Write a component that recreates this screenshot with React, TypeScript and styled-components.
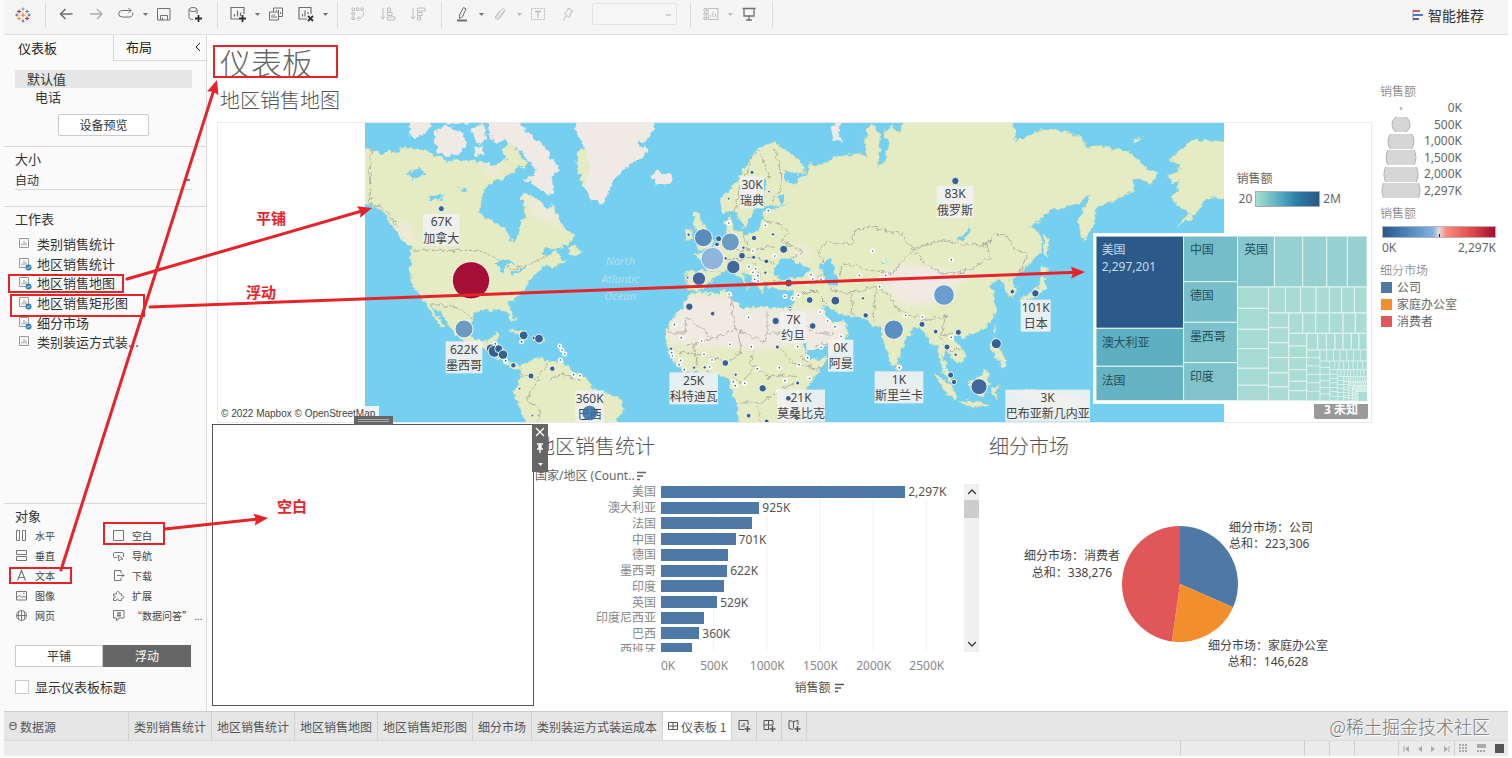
import React from "react";
import styled, { createGlobalStyle, css } from "styled-components";

const uiFont = `"Noto Sans", "Noto Sans CJK SC", sans-serif`;
const cjkFont = `"Noto Sans CJK SC", sans-serif`;

const GlobalStyle = createGlobalStyle`
  * { box-sizing: border-box; }
  body { margin: 0; background: #fff; color: #333; font-family: ${uiFont}; font-size: 12px; }
  button, select, input { font: inherit; color: inherit; margin: 0; }
  ul { list-style: none; margin: 0; padding: 0; }
  svg { display: block; }
  h1, h2, h3, p { margin: 0; font-weight: 300; }
`;

const Shell = styled.div`
  position: relative;
  display: flex;
  flex-direction: column;
  min-height: 100vh;
  padding: 0 4px 2px;
  background: linear-gradient(to right, #fafafa 4px, #fff 4px);
`;

/* ---------- toolbar ---------- */

const Toolbar = styled.header`
  display: flex;
  height: 35px;
  padding: 2px 24px 6px 0;
  background: #f5f5f5;
  border-bottom: 1px solid #e0e0e0;
`;
const Logo = styled.div`
  display: flex;
  align-items: center;
  width: 42px;
  padding-left: 11px;
  border-right: 1px solid #dcdcdc;
`;
const ToolGroup = styled.div`
  display: flex;
  align-items: center;
  padding: 0 8px 2px 5px;
  border-right: 1px solid #dcdcdc;
`;
const ToolButton = styled.button<{ $muted?: boolean }>`
  display: grid;
  place-items: center;
  width: 30px;
  height: 24px;
  padding: 0;
  border: 0;
  background: none;
  color: ${(p) => (p.$muted ? "#bdbdbd" : "#707070")};
`;
const CaretButton = styled(ToolButton)`
  width: 8px;
`;
const FitSelect = styled.select`
  width: 85px;
  height: 22px;
  margin: 0 5px 0 9px;
  appearance: none;
  border: 1px solid #dcdcdc;
  border-radius: 2px;
  background: #f7f7f7 linear-gradient(#c4c4c4, #c4c4c4) no-repeat 73px 10px / 5px 2px;
`;
const ShowMe = styled.button`
  display: flex;
  align-items: center;
  gap: 4px;
  margin-left: auto;
  padding: 0;
  border: 0;
  background: none;
  font-family: ${cjkFont};
  font-size: 14px;
  line-height: 24px;
`;

/* ---------- side pane ---------- */

const Workspace = styled.div`
  display: flex;
  flex: 1;
`;
const SidePane = styled.aside`
  display: flex;
  flex-direction: column;
  flex: none;
  width: 203px;
  background: #fafafa;
  border-right: 1px solid #d8d8d8;
  font-family: ${cjkFont};
`;
const PaneTabs = styled.div`
  display: flex;
`;
const PaneTab = styled.button<{ $active?: boolean }>`
  display: flex;
  align-items: center;
  justify-content: space-between;
  flex: ${(p) => (p.$active ? "0 0 109px" : "1")};
  height: 26px;
  padding: 0 4px 2px ${(p) => (p.$active ? 14 : 12)}px;
  border: 0;
  background: none;
  font-size: 13px;
  color: #222;
  ${(p) => !p.$active && css`border-left: 1px solid #d8d8d8; border-bottom: 1px solid #d8d8d8;`}
`;
const DeviceList = styled.div`
  display: flex;
  flex-direction: column;
  align-items: center;
  height: 85px;
  padding: 9px 14px 0 11px;
`;
const Device = styled.button<{ $active?: boolean; $indent?: number }>`
  width: 100%;
  height: 18px;
  padding: 0 0 0 ${(p) => p.$indent}px;
  border: 0;
  background: ${(p) => (p.$active ? "#e6e6e6" : "none")};
  font-size: 13px;
  line-height: 18px;
  text-align: left;
`;
const PreviewButton = styled.button`
  width: 91px;
  height: 22px;
  margin-top: 8px;
  padding: 0;
  border: 1px solid #ccc;
  border-radius: 2px;
  background: #fff;
  line-height: 20px;
`;
const Section = styled.section<{ $grow?: boolean }>`
  padding: 3px 14px 0 11px;
  border-top: 1px solid #d8d8d8;
  ${(p) => p.$grow && css`flex: 1;`}
`;
const SectionTitle = styled.h2`
  font-size: 13px;
  font-weight: 400;
  line-height: 18px;
`;
const SizeSelect = styled.select`
  width: 100%;
  height: 20px;
  margin: 2px 0 16px;
  padding: 0;
  appearance: none;
  border: 0;
  border-bottom: 1px solid #d8d8d8;
  background: linear-gradient(#777, #777) no-repeat right 2px center / 4px 2px;
`;
const SheetList = styled.ul`
  display: flex;
  flex-direction: column;
  height: 118px;
  margin-top: 6px;
`;
const SheetItem = styled.button`
  display: flex;
  align-items: center;
  gap: 5px;
  height: 20px;
  padding: 0 0 0 3px;
  border: 0;
  background: none;
  font-size: 13px;
  line-height: 20px;
  white-space: nowrap;
`;
const SheetRow = styled.li`
  display: flex;
  align-items: center;
  flex: 1;
  min-height: 0;
`;
const ObjectGrid = styled.div`
  display: grid;
  grid-template-columns: 97px 1fr;
  grid-auto-rows: 20px;
`;
const ObjectButton = styled.button`
  display: flex;
  align-items: center;
  gap: 7px;
  padding: 0;
  border: 0;
  background: none;
  font-size: 10px;
  white-space: nowrap;
  color: #444;
  svg { color: #777; }
`;
const ModeSwitch = styled.div`
  display: flex;
  margin: 20px 1px 10px 0;
`;
const ModeButton = styled.button<{ $active?: boolean }>`
  flex: 1;
  height: 22px;
  padding: 0;
  border: 1px solid ${(p) => (p.$active ? "#666" : "#ccc")};
  background: ${(p) => (p.$active ? "#666" : "#fff")};
  color: ${(p) => (p.$active ? "#fff" : "#333")};
  line-height: 20px;
`;
const TitleToggle = styled.label`
  display: flex;
  align-items: center;
  gap: 6px;
  padding-bottom: 14px;
  font-size: 13px;
  line-height: 20px;
`;
const CheckBox = styled.input`
  width: 14px;
  height: 14px;
  appearance: none;
  border: 1px solid #ccc;
  background: #fff;
`;

/* ---------- dashboard ---------- */

const Canvas = styled.main`
  display: flex;
  flex: 1;
  min-width: 0;
  background: #fff;
`;
const Board = styled.div`
  flex: 1;
  min-width: 0;
  padding: 7px 0 5px;
`;
const BoardTitle = styled.h1`
  padding-left: 13px;
  font-family: ${cjkFont};
  font-size: 31px;
  line-height: 40px;
  color: #666;
`;
const ViewTitle = styled.h2<{ $indent?: number }>`
  padding-left: ${(p) => p.$indent ?? 0}px;
  font-family: ${cjkFont};
  font-size: 20px;
  line-height: 24px;
  color: #555;
  white-space: nowrap;
`;
const MapTitle = styled(ViewTitle)`
  margin: 6px 0 10px;
`;
const MapPanel = styled.section`
  position: relative;
  display: flex;
  justify-content: center;
  height: 301px;
  margin-left: 10px;
  border: 1px solid #ebebeb;
`;
const Attribution = styled.span`
  position: absolute;
  left: 0;
  bottom: 0;
  padding: 0 4px 0 3px;
  background: rgba(255, 255, 255, 0.85);
  font-family: "Liberation Sans", sans-serif;
  font-size: 10px;
  line-height: 16px;
  color: #444;
`;
const RampLegend = styled.div`
  position: absolute;
  right: 30px;
  top: 48px;
  line-height: 16px;
  color: #666;
`;
const RampRow = styled.div`
  display: flex;
  align-items: center;
  gap: 3px;
  margin-top: 4px;
  padding-left: 2px;
`;
const Ramp = styled.span`
  width: 65px;
  height: 16px;
  border: 1px solid #aaa;
  background: linear-gradient(to right, #a8dfd0, #7cc4c9 20%, #53a8c0 40%, #2a7ea5 65%, #2a5783);
`;
const UnknownBadge = styled.button`
  position: absolute;
  right: 3px;
  bottom: 3px;
  width: 54px;
  height: 18px;
  padding: 0;
  border: 0;
  border-radius: 2px;
  background: #9a9a9a;
  color: #fff;
  font-weight: 700;
  line-height: 18px;
`;
const TreemapFloat = styled.div`
  position: absolute;
  right: 1px;
  top: 110px;
  padding: 3px;
  background: #fff;
`;
const LowerRow = styled.div`
  display: grid;
  grid-template-columns: 322fr 446fr 392fr;
  margin-top: 1px;
  padding-left: 5px;
`;
const BlankObject = styled.section`
  position: relative;
  height: 282px;
  border: 1px solid #555;
  background: #fff;
`;
const DragHandle = styled.div`
  position: absolute;
  left: 141px;
  top: -9px;
  width: 39px;
  height: 9px;
  border: solid #666;
  border-width: 3px 4px;
  background: linear-gradient(#aaa 0 1px, #666 1px 2px, #aaa 2px);
`;
const FloatTools = styled.div`
  position: absolute;
  left: calc(100% - 1px);
  top: -1px;
  display: flex;
  flex-direction: column;
  width: 16px;
  background: #666;
  z-index: 1;
`;
const FloatTool = styled.button`
  display: grid;
  place-items: center;
  height: 16px;
  padding: 0;
  border: 0;
  background: none;
  color: #fff;
`;
const BarView = styled.section`
  padding: 10px 1px 0 1px;
`;
const FieldHeader = styled.div`
  display: flex;
  align-items: center;
  gap: 2px;
  margin-top: 10px;
  line-height: 16px;
  color: #666;
`;
const PlotArea = styled.div`
  display: flex;
  height: 168px;
`;
const BarClip = styled.div`
  flex: 1;
  overflow: hidden;
`;
const BarRows = styled.div`
  display: flex;
  flex-direction: column;
  height: 173px;
`;
const BarRow = styled.div`
  display: flex;
  align-items: center;
  flex: 1;
  min-height: 0;
  line-height: 15px;
`;
const BarName = styled.span`
  flex: none;
  width: 126px;
  padding-right: 5px;
  text-align: right;
  color: #888;
`;
const BarTrack = styled.div`
  display: flex;
  align-items: center;
  flex: 1;
  height: 100%;
  background: linear-gradient(to left, #f0f0f0 1px, transparent 1px) 0 0 / calc(100% * 500 / 2850) 100%;
`;
const Bar = styled.div`
  flex: none;
  height: 12px;
  margin-right: 3px;
  background: #4e79a7;
`;
const BarValue = styled.span`
  background: #fff;
  color: #555;
`;
const ScrollBar = styled.div`
  display: flex;
  flex-direction: column;
  width: 15px;
  background: #f0f0f0;
  color: #444;
`;
const ScrollButton = styled.button`
  display: grid;
  place-items: center;
  height: 16px;
  padding: 0;
  border: 0;
  background: none;
`;
const ScrollThumb = styled.div`
  height: 18px;
  margin-bottom: auto;
  background: #cdcdcd;
`;
const Axis = styled.div`
  display: flex;
  margin: 6px 15px 0 126px;
  line-height: 16px;
  color: #888;
`;
const Tick = styled.span<{ $first?: boolean }>`
  width: calc(100% * ${(p) => (p.$first ? 250 : 500)} / 2850);
  text-align: ${(p) => (p.$first ? "left" : "center")};
`;
const AxisTitle = styled.div`
  display: flex;
  align-items: center;
  justify-content: center;
  gap: 4px;
  margin: 6px 1px 0 126px;
  line-height: 16px;
  color: #555;
`;
const PieView = styled.section`
  padding-top: 10px;
`;
const PieChart = styled.svg`
  width: 100%;
  height: auto;
  margin-top: 41px;
  font-size: 12px;
  fill: #444;
`;

/* ---------- legends ---------- */

const LegendPane = styled.aside`
  flex: none;
  width: 136px;
  padding: 49px 12px 0 8px;
  line-height: 16px;
  color: #666;
`;
const SizeLegend = styled.ul`
  display: flex;
  flex-direction: column;
  width: 82px;
  height: 99px;
  margin-bottom: 7px;
`;
const SizeEntry = styled.li`
  display: flex;
  align-items: center;
  justify-content: space-between;
  flex: 1;
  white-space: nowrap;
`;
const Diverging = styled.div`
  height: 12px;
  margin: 4px 0 2px 2px;
  border: 1px solid #b5b5b5;
  background:
    linear-gradient(#222, #222) no-repeat 50% 100% / 1px 3px,
    linear-gradient(to right, #2a5783, #4a80b8 20%, #83b5e0 45%, #e0dede 50%, #fc8d7c 56%, #dd3f45 82%, #a50f35);
`;
const Ends = styled.div`
  display: flex;
  justify-content: space-between;
  padding-left: 2px;
`;
const SegmentLegend = styled.div`
  margin-top: 7px;
`;
const SegmentEntry = styled.div<{ $color: string }>`
  display: flex;
  align-items: center;
  gap: 5px;
  height: 17px;
  padding-left: 1px;
  &::before { content: ""; width: 11px; height: 11px; background: ${(p) => p.$color}; }
`;

/* ---------- bottom bars ---------- */

const SheetTabs = styled.nav`
  display: flex;
  height: 29px;
  background: #e6e6e6;
  border-top: 1px solid #ccc;
  font-family: ${cjkFont};
`;
const SheetTab = styled.button<{ $active?: boolean; $source?: boolean }>`
  display: flex;
  align-items: center;
  gap: 3px;
  width: ${(p) => (p.$source ? "125px" : "auto")};
  padding: 0 5px;
  border: 0;
  border-right: 1px solid #d2d2d2;
  background: ${(p) => (p.$active ? "#fff" : "none")};
  white-space: nowrap;
  color: #555;
`;
const AddTab = styled(SheetTab)`
  width: 25px;
`;
const Watermark = styled.span`
  margin-left: auto;
  padding-right: 18px;
  font-size: 18px;
  font-weight: 300;
  line-height: 28px;
  color: #777;
  text-shadow: 1px 1px 0 #fff;
`;
const StatusBar = styled.footer`
  display: flex;
  justify-content: flex-end;
  height: 16px;
  background: #ebebeb;
  border-top: 1px solid #dcdcdc;
`;
const StatusCell = styled.div<{ $width: number }>`
  display: flex;
  align-items: center;
  justify-content: space-around;
  width: ${(p) => p.$width}px;
  border-left: 1px solid #cfcfcf;
  color: #aaa;
`;

/* ---------- annotations ---------- */

const Overlay = styled.svg`
  position: absolute;
  left: 0;
  top: 0;
  z-index: 2;
  pointer-events: none;
  font-family: ${cjkFont};
  font-size: 15px;
  font-weight: 700;
`;

/* ---------- icons ---------- */

type IconProps = { children: React.ReactNode; size?: number; w?: number };
const Icon = ({ children, size = 16, w = 1 }: IconProps) => (
  <svg width={size} height={size} viewBox={`0 0 ${size} ${size}`} fill="none" stroke="currentColor" strokeWidth={w} aria-hidden>
    {children}
  </svg>
);
const Caret = () => (
  <svg width="5" height="3" viewBox="0 0 5 3" aria-hidden><path d="M0 0h5L2.500 3z" fill="currentColor" /></svg>
);
const SortIcon = () => (
  <Icon size={10} w={1.5}><path d="M0 1.500h9M0 5h6M0 8.500h3" /></Icon>
);
const cross = (x: number, y: number, r: number, color: string) => (
  <path key={`${x}-${y}`} d={`M${x - r} ${y}h${r * 2}M${x} ${y - r}v${r * 2}`} stroke={color} />
);
const Brand = () => (
  <Icon size={16} w={1}>
    {cross(8, 8, 2.5, "#e8762d")}
    {cross(4, 4.5, 2, "#c72035")}
    {cross(12, 4.5, 2, "#59879b")}
    {cross(4, 11.5, 2, "#eb912c")}
    {cross(12, 11.5, 2, "#c72035")}
    {cross(8, 2, 1.5, "#7099a6")}
    {cross(8, 14, 1.5, "#5b6591")}
    {cross(1.8, 8, 1.5, "#5b6591")}
    {cross(14.2, 8, 1.5, "#5b6591")}
  </Icon>
);
const Plus = () => <path d="M12.500 9v7M9 12.500h7" stroke="#333" strokeWidth="1.800" />;
const icons = {
  back: <Icon><path d="M14.500 8H2.500M7.500 3L2.500 8l5 5" strokeWidth="1.600" /></Icon>,
  forward: <Icon><path d="M2 8h12M9 3l5 5-5 5" strokeWidth="1.300" stroke="#aaa" /></Icon>,
  replay: <Icon><path d="M13 4.500H4a3 3 0 0 0 0 6.500h8a3 3 0 0 0 2.500-4.500M10.500 2l2.500 2.500-2.500 2.500" /></Icon>,
  save: <Icon><path d="M1.500 2.500h12.500v11.500H1.500zM4.500 14V9.500h7V14M6.500 14v-2.500" /></Icon>,
  data: <Icon><ellipse cx="7" cy="3.500" rx="4" ry="2" /><path d="M3 3.500v8c0 1.200 2 2 4 2M11 3.500V8" /><Plus /></Icon>,
  newSheet: <Icon><path d="M9 13H1V1.500h13V8M4.500 10.500V8M7.500 10.500V4.500M10.500 10V6.500" strokeWidth="1.2" /><Plus /></Icon>,
  duplicate: <Icon><path d="M5.500 6V2h9v8.500h-4M1.500 6h9v8h-9zM4 12v-3M6 12V8M8 12v-2M8.500 5V4M10.500 8V4M12.500 8V6" /></Icon>,
  clear: <Icon><path d="M9 13H1V1.500h12V8M4.500 10.500V8M7 10.500V4.500M10 8V6" strokeWidth="1.200" /><path d="M10 10l5 5M15 10l-5 5" stroke="#333" strokeWidth="1.800" /></Icon>,
  swap: <Icon><path d="M2 2h2.500v2.500H2zM6.500 2H9v2.500H6.500zM11 2h2v2.500h-2zM2 6.500h2.500V9H2zM2 11h2.500v2.500H2zM13.500 6c.8 4-2 6.500-6 6.500M9.500 10l-2.500 2.500L9.500 15" /></Icon>,
  sortAsc: <Icon><path d="M3 2v11M1 10.500L3 13l2-2.500M7.500 2h3v3h-3zM7.500 6.500H12v3H7.500zM7.500 11H15v3H7.500z" /></Icon>,
  sortDesc: <Icon><path d="M3 2v11M1 10.500L3 13l2-2.500M7.500 2H15v3H7.500zM7.500 6.500H12v3H7.500zM7.500 11h3v3h-3z" /></Icon>,
  highlight: <Icon><path d="M9.500 1.500l2.500 1.300-3.500 8L5.500 12.500V9z" /><path d="M3 14.500h10" strokeWidth="2" /></Icon>,
  clip: <Icon><path d="M12 5l-5 6.500c-1.200 1.500-3.200 0-2-1.500L9.500 3.500c1.700-2 4.500 0 3 2.200L7.500 12.500c-2 2.500-5.500.2-3.700-2.500L8 4.500" /></Icon>,
  text: <Icon><path d="M1.500 2.500h13v11h-13z" strokeDasharray="2 1" /><path d="M5 5.500h6M8 5.500v6" strokeWidth="1.300" /></Icon>,
  pin: <Icon><path d="M8 2l5 3-2 1-1 4-1 1.500-5-4 1.500-.8L8 4zM6 10l-2.500 4.500" /></Icon>,
  cards: <Icon><path d="M5 2.500h10v11H5zM1 2.500h2.500V5H1zM1 7h2.500v2H1zM1 11h2.500v2.500H1zM7.500 11V9M10 11V5.500M12.500 11V7.500" /></Icon>,
  present: <Icon><path d="M1.500 2.500h13M3 2.500v7.500h10V2.500M8 10v4M5 14h6" strokeWidth="1.300" /></Icon>,
};

const SheetIcon = ({ used }: { used?: boolean }) => (
  <Icon size={14}>
    <path d="M1.500 1.500h9v9h-9z" stroke="#999" />
    <path d="M4 8.500V6.500M6 8.500V4M8 8.500V5.500" stroke="#999" />
    {used && <circle cx="10.500" cy="10.500" r="3" fill="#2c7fb0" stroke="none" />}
    {used && <path d="M9 10.500l1 1 2-2" stroke="#fff" />}
  </Icon>
);

const objectIcons: Record<string, React.ReactNode> = {
  水平: <path d="M1.500 1.500h3v10h-3zM7.500 1.500h3v10h-3z" />,
  空白: <path d="M1.500 1.500h10v10h-10z" />,
  垂直: <path d="M1.500 1.500h10v4h-10zM1.500 7.500h10v4h-10z" />,
  导航: <path d="M5 8.500H2.500a1 1 0 0 1-1-1v-3a1 1 0 0 1 1-1h8a1 1 0 0 1 1 1V8M6 6l5 4-2.500.3L7 12z" />,
  文本: <path d="M2.500 11.500l4-10 4 10M4 8.500h5" strokeWidth="1.200" />,
  下载: <path d="M9 4V1.500H2.500v10H9V9M5 6.500h7M10 4.500l2 2-2 2" />,
  图像: <path d="M1.500 2.500h10v8.500h-10zM1.500 9l3-3 2.500 2.500 2-1.500 2.500 2M8 4.500h1.500" />,
  扩展: <path d="M1.500 5h3c-1-3 3-3.500 3-.5l2 .5v2c3-1 3 3 0 2.500v2h-3c.5-2-2.500-2-2 0h-3V9C4 9.500 4 6.500 1.500 7z" />,
  网页: <><circle cx="6.500" cy="6.500" r="5" /><path d="M1.500 6.500h10M6.500 1.500v10M4 2.500c-1 3-1 5 0 8M9 2.500c1 3 1 5 0 8" /></>,
  "“数据问答”": <path d="M1.500 1.500h10.500v7.500H7L4.500 12V9h-3zM5 4h4M5 6.500h4M6 3v5M8 3v5" />,
};

/* ---------- data ---------- */

const worksheets = [
  { name: "类别销售统计" },
  { name: "地区销售统计", used: true },
  { name: "地区销售地图", used: true },
  { name: "地区销售矩形图", used: true },
  { name: "细分市场", used: true },
  { name: "类别装运方式装..." },
];
const objects = ["水平", "空白", "垂直", "导航", "文本", "下载", "图像", "扩展", "网页", "“数据问答”"];
const bars: [string, number, string?][] = [
  ["美国", 2297, "2,297K"], ["澳大利亚", 925, "925K"], ["法国", 859], ["中国", 701, "701K"],
  ["德国", 629], ["墨西哥", 622, "622K"], ["印度", 589], ["英国", 529, "529K"],
  ["印度尼西亚", 405], ["巴西", 360, "360K"], ["西班牙", 287],
];
const sizes: [string, number][] = [["0K", 1], ["500K", 9], ["1,000K", 13], ["1,500K", 15], ["2,000K", 17], ["2,297K", 19]];

/* ---------- map ---------- */

const land = [
  "M-20 85L14 95 50 108 65 118 90 103 110 108 125 95 150 97 200 105 215 115 245 125 262 140 275 128 300 135 330 130 350 140 372 135 400 150 420 140 438 128 425 100 445 75 460 85 465 105 475 95 480 125 500 140 490 160 480 145 460 165 430 185 400 195 375 215 362 250 360 290 385 310 415 325 435 335 450 372 468 375 475 345 478 320 495 300 490 270 480 240 500 232 520 240 545 262 560 280 575 262 590 300 605 330 640 360 630 380 600 395 560 395 535 410 560 420 590 402 600 425 618 433 595 445 575 455 560 442 545 455 520 480 505 495 500 510 480 530 465 545 445 565 450 580 468 612 455 615 440 590 420 578 390 582 365 578 340 595 330 630 340 665 365 680 385 672 395 655 415 650 408 675 400 690 430 695 435 720 450 740 470 750 490 745 490 757 465 758 445 750 425 735 405 715 385 700 350 690 310 675 280 650 255 610 230 580 210 562 225 590 252 632 240 628 215 590 200 562 185 545 165 520 152 500 148 460 155 410 150 395 130 370 105 340 85 310 70 290 45 272 30 262 -20 264z",
  "M480 755L510 735 535 725 560 735 600 735 640 765 680 790 700 820 750 835 785 852 787 880 760 940 505 940 485 890 465 850 462 825 475 800 485 780z",
  "M1080 245L1105 222 1130 200 1150 160 1175 120 1200 95 1240 78 1290 110 1330 140 1332 168 1300 172 1275 160 1270 180 1295 210 1310 190 1340 172 1350 140 1370 150 1400 138 1420 125 1460 120 1490 110 1520 125 1515 80 1522 35 1540 22 1558 60 1560 100 1550 160 1572 130 1588 80 1570 55 1590 30 1620 50 1630 0 1950 0 1965 50 1965 75 2000 62 2050 40 2110 45 2160 60 2180 95 2220 90 2260 97 2300 105 2335 130 2360 160 2392 165 2385 185 2370 205 2345 190 2320 190 2322 225 2290 235 2260 255 2225 265 2205 285 2200 320 2172 375 2155 340 2155 300 2185 255 2190 235 2150 262 2120 270 2060 285 2040 310 2010 330 2035 350 2045 390 2030 420 2000 450 1980 470 1952 488 1968 515 1960 545 1935 530 1932 500 1905 490 1890 510 1902 540 1908 580 1895 610 1870 640 1840 650 1810 665 1785 655 1780 668 1805 700 1818 720 1790 742 1770 715 1755 700 1748 730 1768 770 1782 802 1765 795 1748 765 1740 730 1730 690 1710 680 1690 640 1665 632 1640 665 1620 700 1612 738 1595 745 1580 700 1565 660 1560 625 1540 632 1520 610 1485 600 1440 595 1400 570 1380 565 1405 610 1425 622 1450 610 1465 650 1440 690 1400 712 1345 738 1335 700 1310 650 1290 605 1298 560 1300 525 1260 520 1230 512 1210 495 1205 530 1190 510 1170 480 1145 465 1165 520 1150 495 1125 470 1110 458 1080 470 1060 482 1040 510 1010 525 975 520 975 465 1045 465 1030 430 1000 415 1050 405 1080 375 1100 360 1095 315 1112 300 1120 340 1150 352 1195 345 1212 285 1265 270 1300 255 1265 265 1210 270 1215 215 1225 180 1200 200 1180 250 1178 290 1150 335 1125 285 1085 290z",
  "M985 540L1010 528 1060 535 1110 522 1115 550 1150 575 1200 570 1260 580 1290 582 1308 640 1345 720 1370 732 1402 722 1370 775 1340 810 1330 850 1335 940 1140 940 1130 870 1110 810 1100 785 1060 768 990 768 950 750 925 710 915 660 930 610 965 575z",
  "M1000 290L1018 290 1020 312 1035 330 1055 375 1050 395 1010 402 1020 380 1005 365 1015 345 1000 325z",
  "M970 345L990 340 998 365 975 375z",
  "M625 395L645 385 660 410 645 420 622 410zM440 640L480 642 502 668 475 655zM515 660L550 665 550 678 520 674z",
  "M2630 80L2560 75 2510 70 2480 80 2455 110 2428 130 2460 145 2455 165 2420 180 2435 200 2460 190 2450 220 2435 240 2450 270 2490 290 2450 333 2505 292 2530 255 2560 240 2630 262z",
  "M2050 480L2058 515 2020 545 1975 552 2000 538 2035 515 2040 490zM2045 452L2068 462 2045 475zM2052 350L2065 365 2058 425 2050 410zM1903 625L1910 640 1903 652zM1890 675L1905 665 1920 705 1942 745 1925 762 1918 735 1895 705z",
  "M1720 765L1750 790 1795 838 1785 855 1750 822zM1800 852L1880 862 1885 874 1810 866zM1828 800L1855 780 1880 762 1885 800 1870 838 1838 832zM1895 815L1920 808 1905 825 1910 845 1895 838zM1950 825L2010 820 2080 830 2180 850 2180 880 2050 870z",
  "M1608 740L1622 748 1622 762 1608 760zM2320 65L2345 68 2325 76z",
];
const tundra = [
  "M640 0L885 0 880 40 860 70 830 80 862 100 850 120 820 135 790 160 760 190 745 225 725 265 695 250 675 215 660 180 655 150 660 110 670 90 650 50z",
  "M385 0L470 0 500 50 550 90 598 160 570 185 580 220 575 240 545 225 515 200 490 190 530 170 510 140 480 100 440 70 410 80 385 55z",
  "M220 50L250 28 300 40 320 80 300 112 270 120 230 110z",
  "M145 55L150 10 200 10 215 30 190 55 165 68zM330 40L370 20 380 70 350 82zM240 5L330 5 320 25 260 24zM340 95L365 90 370 115 345 118z",
  "M870 175L885 165 910 170 935 170 940 190 915 208 885 200z",
  "M1410 30L1445 10 1435 60 1450 80 1420 72z",
  "M985 540L1010 532 1110 540 1150 575 1290 582 1308 640 1320 680 1260 690 1180 700 1100 690 1000 690 920 680 930 610 965 575z",
  "M1300 580L1400 575 1425 622 1462 630 1440 690 1345 735z",
  "M1560 470L1640 440 1760 460 1850 470 1800 500 1720 560 1640 570 1590 540z",
];
const water = [
  "M1238 465L1258 430 1285 422 1345 460 1335 480 1280 487 1245 482z",
  "M1378 448L1405 425 1425 455 1432 508 1405 512 1390 480z",
  "M1285 600L1298 600 1345 690 1338 705zM1338 705L1408 688 1400 722 1350 728z",
  "M140 170L180 155 195 175 160 188zM205 245L245 232 248 250 215 250zM405 440L440 425 465 445 435 445 425 470 415 450zM445 470L500 450 480 465 455 478z",
  "M1790 372L1815 350 1828 325 1830 345 1810 370zM1255 240L1272 235 1270 262 1258 258zM1563 440L1580 428 1570 442z",
  "M300 215L318 215 315 225 302 224zM380 220L390 225 395 255 385 240z",
];
const borders =
  "M30 95V262L75 280 110 330M158 402H355L400 420 450 460 500 445 540 430 570 415M210 562L260 570 300 575 335 610M1175 120L1165 160 1140 200 1125 285M1200 115L1220 160 1230 190M1240 95L1260 150 1262 220 1230 260M1205 310L1250 320 1290 350 1260 375 1300 390 1325 405 1290 430M1120 350L1130 400 1180 400 1240 390M1150 350L1160 390M1050 465L1085 460M980 470V515M1090 430L1130 430 1180 425 1240 440M1180 440L1200 490M1240 490L1350 500 1400 470M975 600L1060 665 1125 640 1115 560 1105 530M1220 582V650H1300M1125 640L1215 680 1220 650M920 650H975V600M980 690L1060 665M1000 690L1010 760M1140 650L1140 710 1100 740 1040 720 960 705M1180 700L1170 740 1220 780 1310 780M1260 700L1300 740 1390 760M1110 770L1140 800 1180 760M1140 860H1200L1250 830 1300 800M1200 920L1190 860M1300 860L1340 830M1372 405L1400 375 1475 385 1480 350 1535 328 1575 345 1620 350 1660 400 1630 430 1595 470 1520 460 1480 445 1440 440 1440 480M1372 405L1390 440M1660 400L1740 370 1800 385 1880 385 1895 355 1940 355 1960 400 2000 410 1980 470M1660 400L1700 450 1760 475 1830 460 1890 420 1880 385M1310 540L1360 520 1400 560M1410 520L1470 530 1480 595M1470 530L1550 510 1590 540 1610 580 1690 610 1760 600 1740 650 1780 655M1550 510L1540 580 1545 620M1740 660L1760 700 1800 700M485 775L530 790 560 740M530 790L500 850 540 880 530 920M560 790L600 775 660 790M1310 600L1360 650 1420 650M1360 690L1420 680M1320 720L1380 770";

const dark = "#35608f";
const bubbles: [number, number, number, string?][] = [
  [332, 492, 56, "#a50f35"], [243, 277, 9], [311, 638, 27, "#6b9bc3"], [490, 657, 13], [521, 665, 6], [536, 667, 13],
  [392, 697, 14], [402, 705, 18], [415, 697, 12], [428, 715, 14], [459, 747, 8], [512, 779, 9], [576, 757, 8], [478, 817, 4],
  [516, 898, 4], [1175, 168, 6], [1226, 226, 4], [1105, 247, 4], [985, 355, 5], [1029, 364, 27, "#5a8bbd"],
  [1110, 377, 27, "#6b9cc4"], [1056, 427, 34, "#8fb5dc"], [1075, 367, 9], [1070, 384, 7], [1181, 365, 8], [1238, 354, 5],
  [1270, 399, 12], [1145, 418, 10], [1119, 452, 20, "#41699b"], [1096, 426, 5], [1016, 487, 20, "#41699b"], [982, 484, 4],
  [1149, 394, 5], [1180, 423, 6], [1218, 435, 7], [1215, 469, 5], [1285, 500, 12], [987, 571, 11], [1057, 592, 7],
  [1246, 614, 11], [1251, 692, 6], [1289, 573, 4], [932, 697, 5], [1095, 740, 10], [1001, 754, 5], [1033, 753, 5],
  [1126, 775, 5], [1207, 816, 11], [1165, 898, 7], [1312, 800, 6], [1219, 915, 7], [1785, 194, 11], [1348, 551, 10],
  [1425, 553, 13], [1508, 546, 5], [1516, 597, 8], [1357, 629, 10], [1751, 536, 31, "#6b9ed0"], [1600, 640, 29, "#5a8fc4"],
  [1685, 624, 9], [1726, 646, 7], [1794, 648, 9], [1760, 692, 9], [1786, 715, 5], [1771, 776, 9], [1781, 797, 8],
  [1856, 811, 24, "#41699b"], [1908, 682, 15], [1956, 526, 7], [2025, 531, 11],
];
const specks: [number, number][] = [
  [1224, 283], [1215, 327], [1105, 320], [1178, 404], [1243, 419], [1166, 451], [1186, 457], [1178, 468], [1193, 478], [1183, 489],
  [1193, 494], [1274, 540], [1297, 545], [1314, 537], [1107, 533], [1165, 603], [942, 625], [963, 664], [1024, 674], [1109, 684],
  [1173, 691], [1031, 714], [1055, 731], [1048, 752], [961, 732], [956, 745], [934, 709], [936, 719], [972, 760], [1191, 757],
  [1257, 754], [1316, 745], [1312, 691], [1274, 793], [1153, 801], [1119, 796], [1125, 808], [1254, 825], [1352, 475], [1357, 488],
  [1382, 489], [1341, 500], [1537, 404], [1773, 430], [1497, 477], [1576, 477], [1560, 488], [1558, 511], [1380, 587], [1402, 614],
  [1424, 631], [1442, 660], [1382, 693], [1342, 724], [1348, 786], [1636, 597], [1686, 602], [1773, 663], [1617, 754], [598, 689],
  [605, 701], [613, 713], [600, 731], [640, 775], [659, 778], [405, 682], [484, 676], [436, 733],
];
const mapLabels: [number, number, number, string, string][] = [
  [243, 293, 110, "67K", "加拿大"], [1175, 180, 72, "30K", "瑞典"], [311, 675, 110, "622K", "墨西哥"],
  [688, 822, 86, "360K", "巴西"], [1000, 768, 146, "25K", "科特迪瓦"], [1299, 585, 76, "7K", "约旦"],
  [1784, 209, 110, "83K", "俄罗斯"], [2026, 550, 90, "101K", "日本"], [1616, 765, 146, "1K", "斯里兰卡"],
  [1441, 670, 76, "0K", "阿曼"], [1322, 820, 144, "21K", "莫桑比克"], [2062, 820, 254, "3K", "巴布亚新几内亚"],
];

const MapSvg = styled.svg`
  width: 859px;
  height: 299px;
  background: #75cff0;
  font-size: 36px;
  text-anchor: middle;
`;

const WorldMap = () => (
  <MapSvg viewBox="14 20 2577 897" role="img" aria-label="地区销售地图">
    <defs>
      <filter id="coast" x="-20" y="0" width="2650" height="940" filterUnits="userSpaceOnUse">
        <feTurbulence type="fractalNoise" baseFrequency="0.06" numOctaves="3" seed="4" />
        <feDisplacementMap in="SourceGraphic" scale="22" xChannelSelector="R" yChannelSelector="G" />
      </filter>
      <filter id="soft"><feGaussianBlur stdDeviation="10" /></filter>
      <clipPath id="landClip"><path d={land.join("")} /></clipPath>
    </defs>
    <g filter="url(#coast)">
      {land.map((d) => <path key={d} d={d} fill="#e5ecc3" stroke="#d9e3b4" strokeWidth="2" />)}
      {tundra.slice(0, 6).map((d) => <path key={d} d={d} fill="#efebe4" />)}
      <path d="M650 110L675 95 690 150 672 215 655 170z" fill="#e5ecc3" />
      <g clipPath="url(#landClip)">
        {tundra.slice(6).map((d) => <path key={d} d={d} fill="#f0eae2" filter="url(#soft)" />)}
        <path d="M480 230L580 270 600 330 520 300zM370 130L430 130 400 190 380 180zM100 300L150 330 170 400 130 370zM1310 370L1350 410 1340 440 1300 420z" fill="#eeeadb" filter="url(#soft)" />
      </g>
      {water.map((d) => <path key={d} d={d} fill="#75cff0" />)}
      <path d={borders} fill="none" stroke="#a5a698" strokeWidth="2.500" />
    </g>
    <g fill="#b4def0" fontStyle="italic" fontSize="34">
      <text x="780" y="446">North</text>
      <text x="780" y="499">Atlantic</text>
      <text x="780" y="551">Ocean</text>
    </g>
    {specks.map(([x, y]) => <circle key={`${x},${y}`} cx={x} cy={y} r="5" fill={dark} stroke="#fff" strokeWidth="5" />)}
    {mapLabels.map(([x, y, w, value, name]) => (
      <g key={name} fill="#444">
        <rect x={x - w / 2} y={y} width={w} height="96" fill="#f1f1f1" fillOpacity="0.93" />
        <text x={x} y={y + 37}>{value}</text>
        <text x={x} y={y + 86}>{name}</text>
      </g>
    ))}
    {bubbles.map(([x, y, r, c = dark]) => (
      <circle key={`${x},${y}`} cx={x} cy={y} r={r} fill={c} stroke="#fff" strokeOpacity="0.85" strokeWidth="3" />
    ))}
    <circle cx="688" cy="890" r="22" fill="#2f6ca5" fillOpacity="0.85" />
    <circle cx="1284" cy="846" r="7" fill={dark} />
    <circle cx="1310" cy="906" r="5" fill={dark} />
  </MapSvg>
);

/* ---------- treemap ---------- */

type Cell = [number, number, number, number, string];
const split = (stops: number[], fixedA: number, fixedB: number, vertical: boolean, color: string): Cell[] =>
  stops.slice(1).map((end, i) =>
    vertical ? [fixedA, stops[i], fixedB, end, color] : [stops[i], fixedA, end, fixedB, color],
  );
const pale = "#abdcd2";
const tail: Cell[] = [];
let tx = 720;
let ty = 840;
for (let i = 0; i < 7; i++) {
  const w = 861 - tx;
  const h = 992 - ty;
  const rowH = h * 0.22;
  const colW = w * 0.21;
  const nx = 7 + i;
  for (let k = 0; k < nx; k++) tail.push([tx + (w / nx) * k, ty, tx + (w / nx) * (k + 1), ty + rowH, pale]);
  const ny = 6 + (i % 2);
  const rest = h - rowH;
  for (let k = 0; k < ny; k++)
    tail.push([tx, ty + rowH + (rest / ny) * k, tx + colW, ty + rowH + (rest / ny) * (k + 1), pale]);
  tx += colW;
  ty += rowH;
}
const cells: Cell[] = [
  [47, 498, 310, 775, "#2b5a8a"],
  [47, 775, 310, 889, "#5fafc2"],
  [47, 889, 310, 992, "#66b3c4"],
  [310, 498, 472, 635, "#75bcc8"],
  [310, 635, 472, 757, "#79bfca"],
  [310, 757, 472, 878, "#7dc2cb"],
  [310, 878, 472, 992, "#80c3cb"],
  [472, 498, 583, 651, "#86c8cd"],
  ...split([583, 668, 740, 802, 861], 498, 651, false, "#96d0d0"),
  ...split([651, 715, 778, 836, 895, 946, 992], 472, 565, true, "#a6dad2"),
  ...split([565, 616, 661, 708, 748, 785, 823, 861], 651, 729, false, "#a9dbd2"),
  ...split([729, 773, 818, 863, 909, 951, 992], 565, 626, true, pale),
  ...split([626, 668, 707, 748, 789, 826, 861], 729, 790, false, pale),
  ...split([790, 828, 863, 899, 934, 962, 992], 626, 680, true, pale),
  ...split([680, 713, 739, 765, 789, 814, 837, 861], 790, 840, false, pale),
  ...split([840, 864, 888, 913, 939, 964, 992], 680, 720, true, pale),
  ...tail,
];
const treeLabels: [number, number, string][] = [
  [64, 818, "澳大利亚"], [64, 931, "法国"], [329, 540, "中国"], [329, 676, "德国"],
  [329, 800, "墨西哥"], [329, 919, "印度"], [492, 540, "英国"],
];

const Treemap = () => (
  <svg width="271" height="165" viewBox="47 498 814 495" fontSize="36" fill="#24505c" role="img" aria-label="地区销售矩形图">
    <rect x="47" y="498" width="814" height="495" fill={pale} />
    {cells.map(([x1, y1, x2, y2, fill], i) => (
      <rect key={i} x={x1} y={y1} width={x2 - x1} height={y2 - y1} fill={fill} stroke="#e2f4f1" strokeWidth={i > 50 ? 2 : 3} />
    ))}
    <g fill="#c3dcec">
      <text x="64" y="553">美国</text>
      <text x="64" y="602">2,297,201</text>
    </g>
    {treeLabels.map(([x, y, t]) => <text key={t} x={x} y={y + 13}>{t}</text>)}
  </svg>
);

/* ---------- arrows ---------- */

const RED = "#e62329";
const Arrow = ({ from, to }: { from: [number, number]; to: [number, number] }) => {
  const dx = to[0] - from[0];
  const dy = to[1] - from[1];
  const len = Math.hypot(dx, dy);
  const angle = (Math.atan2(dy, dx) * 180) / Math.PI;
  return (
    <g transform={`translate(${from[0]} ${from[1]}) rotate(${angle})`}>
      <path d={`M0 0H${len - 8}`} stroke={RED} strokeWidth="3" strokeLinecap="round" />
      <path d={`M${len} 0l-14 6 2-6-2-6z`} fill={RED} />
    </g>
  );
};

const Annotations = () => (
  <Overlay width="1100" height="700" viewBox="0 0 1100 700">
    <g fill="none" stroke={RED} strokeWidth="2">
      <rect x="214" y="46" width="123" height="31" />
      <rect x="9" y="275" width="114" height="17" />
      <rect x="11" y="295" width="133" height="21" />
      <rect x="104" y="523" width="60" height="21" />
      <rect x="10" y="568" width="61" height="15" />
    </g>
    <Arrow from={[61, 570]} to={[217, 80]} />
    <Arrow from={[127, 279]} to={[372, 208]} />
    <Arrow from={[150, 307]} to={[1085, 272]} />
    <Arrow from={[165, 529]} to={[268, 518]} />
    <g fill={RED}>
      <text x="256" y="224">平铺</text>
      <text x="246" y="298">浮动</text>
      <text x="277" y="512">空白</text>
    </g>
  </Overlay>
);

const slice = (a: number, b: number) => {
  const p = (t: number) => `${200 + 58 * Math.sin(t * 2 * Math.PI)} ${85 - 58 * Math.cos(t * 2 * Math.PI)}`;
  return `M200 85L${p(a)}A58 58 0 ${b - a > 0.5 ? 1 : 0} 1 ${p(b)}z`;
};

const Tool = ({ label, icon, muted, menu }: { label: string; icon: React.ReactNode; muted?: boolean; menu?: boolean }) => (
  <>
    <ToolButton aria-label={label} $muted={muted}>{icon}</ToolButton>
    {menu && <CaretButton aria-label={`${label}菜单`} $muted={muted}><Caret /></CaretButton>}
  </>
);

export default function App() {
  return (
    <Shell>
      <GlobalStyle />
      <Toolbar>
        <Logo><Brand /></Logo>
        <ToolGroup>
          <Tool label="撤消" icon={icons.back} />
          <Tool label="重做" icon={icons.forward} />
          <Tool label="重播" icon={icons.replay} menu />
          <Tool label="保存" icon={icons.save} />
          <Tool label="新建数据源" icon={icons.data} />
        </ToolGroup>
        <ToolGroup>
          <Tool label="新建工作表" icon={icons.newSheet} menu />
          <Tool label="复制" icon={icons.duplicate} />
          <Tool label="清除" icon={icons.clear} menu />
        </ToolGroup>
        <ToolGroup>
          <Tool label="交换" icon={icons.swap} muted />
          <Tool label="升序" icon={icons.sortAsc} muted />
          <Tool label="降序" icon={icons.sortDesc} muted />
        </ToolGroup>
        <ToolGroup>
          <Tool label="突出显示" icon={icons.highlight} menu />
          <Tool label="分组" icon={icons.clip} muted menu />
          <Tool label="标签" icon={icons.text} muted />
          <Tool label="固定" icon={icons.pin} muted />
          <FitSelect aria-label="适合" disabled />
        </ToolGroup>
        <ToolGroup>
          <Tool label="显示卡" icon={icons.cards} muted menu />
          <Tool label="演示" icon={icons.present} />
        </ToolGroup>
        <ShowMe>
          <Icon size={12} w={2}>
            <path d="M1 1v11" stroke="#999" strokeWidth="1" />
            <path d="M1 2h7" stroke="#c75b6d" /><path d="M1 6h10" stroke="#4e79c7" /><path d="M1 10h6" stroke="#6b5fb0" />
          </Icon>
          智能推荐
        </ShowMe>
      </Toolbar>

      <Workspace>
        <SidePane>
          <PaneTabs>
            <PaneTab $active>仪表板</PaneTab>
            <PaneTab>布局<Icon size={8}><path d="M6 0L2 4l4 4" /></Icon></PaneTab>
          </PaneTabs>
          <DeviceList>
            <Device $active $indent={12}>默认值</Device>
            <Device $indent={20}>电话</Device>
            <PreviewButton>设备预览</PreviewButton>
          </DeviceList>
          <Section>
            <SectionTitle><label htmlFor="size">大小</label></SectionTitle>
            <SizeSelect id="size"><option>自动</option></SizeSelect>
          </Section>
          <Section $grow>
            <SectionTitle>工作表</SectionTitle>
            <SheetList>
              {worksheets.map((s) => (
                <SheetRow key={s.name}><SheetItem><SheetIcon used={s.used} />{s.name}</SheetItem></SheetRow>
              ))}
            </SheetList>
          </Section>
          <Section>
            <SectionTitle>对象</SectionTitle>
            <ObjectGrid>
              {objects.map((o) => (
                <ObjectButton key={o}>
                  <Icon size={13}>{objectIcons[o]}</Icon>
                  {o}{o.startsWith("“") && " ..."}
                </ObjectButton>
              ))}
            </ObjectGrid>
            <ModeSwitch>
              <ModeButton>平铺</ModeButton>
              <ModeButton $active>浮动</ModeButton>
            </ModeSwitch>
            <TitleToggle><CheckBox type="checkbox" />显示仪表板标题</TitleToggle>
          </Section>
        </SidePane>

        <Canvas>
          <Board>
            <BoardTitle>仪表板</BoardTitle>
            <MapTitle $indent={13}>地区销售地图</MapTitle>
            <MapPanel>
              <WorldMap />
              <Attribution>© 2022 Mapbox © OpenStreetMap</Attribution>
              <RampLegend>
                销售额
                <RampRow>20<Ramp />2M</RampRow>
              </RampLegend>
              <UnknownBadge>3 未知</UnknownBadge>
              <TreemapFloat><Treemap /></TreemapFloat>
            </MapPanel>
            <LowerRow>
              <BlankObject aria-label="空白">
                <DragHandle />
                <FloatTools>
                  <FloatTool aria-label="移除"><Icon size={10}><path d="M1 1l8 8M9 1L1 9" strokeWidth="1.300" /></Icon></FloatTool>
                  <FloatTool aria-label="固定位置"><Icon size={10}><path d="M2 1h6M5 1v5M2 6h6M5 6v4M4 2v3M6 2v3" strokeWidth="1.300" /></Icon></FloatTool>
                  <FloatTool aria-label="更多"><Caret /></FloatTool>
                </FloatTools>
              </BlankObject>
              <BarView>
                <ViewTitle>地区销售统计</ViewTitle>
                <FieldHeader>国家/地区 (Count..<SortIcon /></FieldHeader>
                <PlotArea>
                  <BarClip>
                    <BarRows>
                      {bars.map(([name, value, label]) => (
                        <BarRow key={name}>
                          <BarName>{name}</BarName>
                          <BarTrack>
                            <Bar style={{ width: `${(value / 2850) * 100}%` }} />
                            {label && <BarValue>{label}</BarValue>}
                          </BarTrack>
                        </BarRow>
                      ))}
                    </BarRows>
                  </BarClip>
                  <ScrollBar>
                    <ScrollButton aria-label="向上"><Icon size={8} w={1.5}><path d="M0 6l4-4 4 4" /></Icon></ScrollButton>
                    <ScrollThumb />
                    <ScrollButton aria-label="向下"><Icon size={8} w={1.5}><path d="M0 2l4 4 4-4" /></Icon></ScrollButton>
                  </ScrollBar>
                </PlotArea>
                <Axis>
                  <Tick $first>0K</Tick>
                  {["500K", "1000K", "1500K", "2000K", "2500K"].map((t) => <Tick key={t}>{t}</Tick>)}
                </Axis>
                <AxisTitle>销售额<SortIcon /></AxisTitle>
              </BarView>
              <PieView>
                <ViewTitle $indent={9}>细分市场</ViewTitle>
                <PieChart viewBox="0 0 392 180" role="img" aria-label="细分市场">
                  <path d={slice(0, 0.3153)} fill="#4e79a7" />
                  <path d={slice(0.3153, 0.5223)} fill="#f28e2b" />
                  <path d={slice(0.5223, 1)} fill="#e15759" />
                  <text x="249" y="33">细分市场：公司</text>
                  <text x="249" y="49">总和：223,306</text>
                  <g textAnchor="middle">
                    <text x="92" y="61">细分市场：消费者</text>
                    <text x="92" y="78">总和：338,276</text>
                    <text x="288" y="151">细分市场：家庭办公室</text>
                    <text x="288" y="167">总和：146,628</text>
                  </g>
                </PieChart>
              </PieView>
            </LowerRow>
          </Board>

          <LegendPane>
            <p>销售额</p>
            <SizeLegend>
              {sizes.map(([label, r]) => (
                <SizeEntry key={label}>
                  <svg width="42" height="15" viewBox="0 0 42 15" aria-hidden>
                    <circle cx="21" cy="7.500" r={r} fill="#d6d6d6" stroke="#b0b0b0" />
                  </svg>
                  {label}
                </SizeEntry>
              ))}
            </SizeLegend>
            <p>销售额</p>
            <Diverging />
            <Ends><span>0K</span><span>2,297K</span></Ends>
            <SegmentLegend>
              <p>细分市场</p>
              <SegmentEntry $color="#4e79a7">公司</SegmentEntry>
              <SegmentEntry $color="#f28e2b">家庭办公室</SegmentEntry>
              <SegmentEntry $color="#e15759">消费者</SegmentEntry>
            </SegmentLegend>
          </LegendPane>
        </Canvas>
      </Workspace>

      <SheetTabs>
        <SheetTab $source>
          <Icon size={8}><ellipse cx="4" cy="2" rx="3" ry="1.500" /><path d="M1 2v4c0 2 6 2 6 0V2" /></Icon>
          数据源
        </SheetTab>
        {["类别销售统计", "地区销售统计", "地区销售地图", "地区销售矩形图", "细分市场", "类别装运方式装运成本"].map((t) => (
          <SheetTab key={t}>{t}</SheetTab>
        ))}
        <SheetTab $active>
          <Icon size={10}><path d="M.5 1.500h9v7h-9zM.5 5h9M5 1.500v7" /></Icon>
          仪表板 1
        </SheetTab>
        <AddTab aria-label="新建工作表">
          <Icon size={14}><path d="M7 10.500H2V1.500h9V6M5 8V6M7 8V4" /><path d="M10.500 7v6M7.500 10h6" strokeWidth="1.500" /></Icon>
        </AddTab>
        <AddTab aria-label="新建仪表板">
          <Icon size={14}><path d="M7 10.500H2V1.500h9V6M2 6h9M6.500 1.500v9" /><path d="M10.500 7v6M7.500 10h6" strokeWidth="1.500" /></Icon>
        </AddTab>
        <AddTab aria-label="新建故事">
          <Icon size={14}><path d="M6 10.500L2 9.500V1.500l4.500 1 4.500-1V6M6.500 2.500v7" /><path d="M10.500 7v6M7.500 10h6" strokeWidth="1.500" /></Icon>
        </AddTab>
        <Watermark>@稀土掘金技术社区</Watermark>
      </SheetTabs>
      <StatusBar>
        <StatusCell $width={124} />
        <StatusCell $width={25} />
        <StatusCell $width={25} />
        <StatusCell $width={44} />
        <StatusCell $width={56}>
          <Icon size={6}><path d="M1 0v6" /><path d="M6 0v6L2 3z" fill="currentColor" stroke="none" /></Icon>
          <Icon size={6}><path d="M5 0v6L1 3z" fill="currentColor" stroke="none" /></Icon>
          <Icon size={6}><path d="M1 0v6l4-3z" fill="currentColor" stroke="none" /></Icon>
          <Icon size={6}><path d="M5 0v6" /><path d="M0 0v6l4-3z" fill="currentColor" stroke="none" /></Icon>
        </StatusCell>
        <StatusCell $width={54}>
          <Icon size={9} w={2}><path d="M0 1h9M0 4h9M0 7h9" strokeDasharray="2 1" /></Icon>
          <Icon size={9} w={2}><path d="M0 2h9" strokeWidth="4" /><path d="M0 7h9" strokeDasharray="2 1" /></Icon>
          <Icon size={9}><path d="M0 0h9v9H0z" fill="#555" stroke="none" /></Icon>
        </StatusCell>
      </StatusBar>
      <Annotations />
    </Shell>
  );
}
